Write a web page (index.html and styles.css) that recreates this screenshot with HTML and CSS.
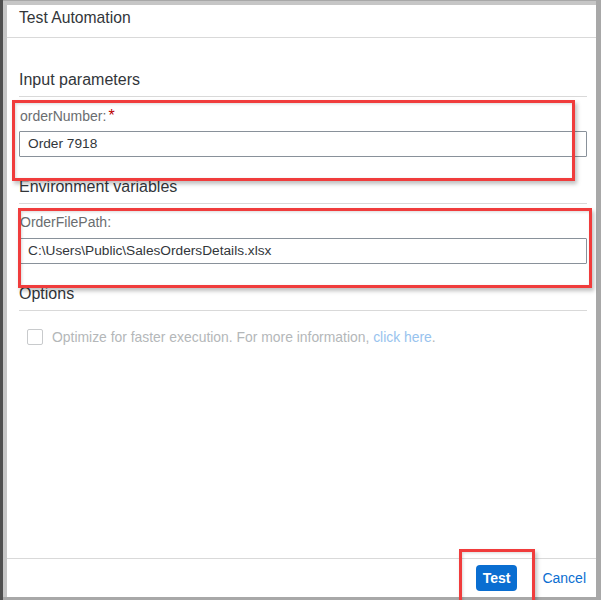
FILE: index.html
```html
<!DOCTYPE html>
<html>
<head>
<meta charset="utf-8">
<link rel="stylesheet" href="styles.css">
</head>
<body>
<div class="frame">
  <div class="dialog">
    <header class="dialog-header">
      <h1 class="dialog-title">Test Automation</h1>
    </header>
    <main class="dialog-content">
      <h2 class="section-title sec-input">Input parameters</h2>
      <div class="field field-first">
        <label class="field-label">orderNumber:<span class="req">*</span></label>
        <div class="input">Order 7918</div>
      </div>
      <h2 class="section-title sec-env">Environment variables</h2>
      <div class="field field-second">
        <label class="field-label">OrderFilePath:</label>
        <div class="input">C:\Users\Public\SalesOrdersDetails.xlsx</div>
      </div>
      <h2 class="section-title sec-opt">Options</h2>
      <div class="check-row">
        <span class="checkbox"></span>
        <span class="check-text">Optimize for faster execution. For more information, <span class="link">click here</span>.</span>
      </div>
    </main>
    <footer class="dialog-footer">
      <button class="btn btn-primary">Test</button>
      <button class="btn btn-link">Cancel</button>
    </footer>
  </div>
</div>
<div class="mark mark-1"></div>
<div class="mark mark-2"></div>
<div class="mark mark-3"></div>
</body>
</html>
```
FILE: styles.css
```css
html, body {
  margin: 0;
  padding: 0;
  height: 600px;
  overflow: hidden;
}
body {
  position: relative;
  background: linear-gradient(to right, #4f4f4f 0 3px, #a8a8a8 3px);
  font-family: "Liberation Sans", Arial, sans-serif;
  color: #32363a;
  padding: 1px 0 0 3px;
  box-sizing: border-box;
}
.frame {
  width: 593px;
  height: 596px;
  background: #c6c6c6;
  padding: 4px 0 0 4px;
  box-sizing: border-box;
}
.dialog {
  background: #fff;
  height: 592px;
  width: 589px;
  display: flex;
  flex-direction: column;
}
.dialog-header {
  border-bottom: 1px solid #d9d9d9;
  padding: 3px 12px 0;
  box-sizing: content-box;
  height: 29px;
}
.dialog-title {
  margin: 0;
  font-size: 15.7px;
  font-weight: normal;
  line-height: 20px;
  color: #32363a;
}
.dialog-content {
  flex: 1;
  padding: 0 9px 0 12px;
}
.section-title {
  margin: 0;
  font-size: 16px;
  font-weight: normal;
  line-height: 20px;
  padding-bottom: 6px;
  border-bottom: 1px solid #d9d9d9;
  color: #32363a;
}
.sec-input { margin-top: 32px; }
.sec-env { margin-top: 20px; }
.sec-opt { margin-top: 20px; }
.field-label {
  display: block;
  font-size: 14px;
  line-height: 18px;
  color: #6a6d70;
}
.field-first .field-label { margin-top: 10px; padding-left: 1px; }
.field-second .field-label { margin-top: 9px; padding-left: 1px; }
.req {
  color: #bb0000;
  margin-left: 2px;
  font-size: 16px;
}
.input {
  height: 26px;
  box-sizing: border-box;
  border: 1px solid #89919a;
  border-radius: 1px;
  padding: 0 8px;
  font-size: 13.7px;
  line-height: 24px;
  color: #32363a;
  white-space: nowrap;
}
.field-first .input { margin-top: 6px; }
.field-second .input { margin-top: 7px; }
.check-row {
  display: flex;
  align-items: center;
  margin-top: 18px;
  padding-left: 8px;
  height: 16px;
}
.checkbox {
  width: 16px;
  height: 16px;
  box-sizing: border-box;
  border: 1px solid #c8cacc;
  border-radius: 2px;
  background: #fff;
  flex: none;
}
.check-text {
  margin-left: 9px;
  font-size: 13.9px;
  color: #b4b7b9;
  white-space: nowrap;
}
.link { color: #98c3ee; }
.dialog-footer {
  border-top: 1px solid #d9d9d9;
  display: flex;
  justify-content: flex-end;
  align-items: flex-start;
  gap: 25px;
  padding: 6px 10px 0 0;
  box-sizing: border-box;
  height: 39px;
}
.btn {
  font-family: "Liberation Sans", Arial, sans-serif;
  font-size: 14px;
  border: none;
  margin: 0;
  cursor: pointer;
}
.btn-primary {
  background: #0a6ed1;
  color: #fff;
  font-weight: bold;
  height: 26px;
  padding: 0 7px;
  border-radius: 4px;
}
.btn-link {
  background: transparent;
  color: #0a6ed1;
  padding: 0;
  height: 26px;
  line-height: 26px;
}
.mark {
  position: absolute;
  border: 3px solid #f03c3c;
  box-sizing: border-box;
  box-shadow: 2px 3px 4px rgba(0,0,0,0.25), inset 1px 1px 3px rgba(0,0,0,0.15);
}
.mark-1 { left: 12px; top: 100px; width: 563px; height: 81px; }
.mark-2 { left: 18px; top: 208px; width: 574px; height: 80px; }
.mark-3 { left: 459px; top: 549px; width: 76px; height: 56px; }
```
